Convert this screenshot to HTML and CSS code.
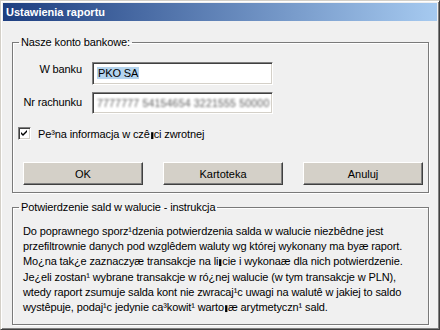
FILE: index.html
```html
<!DOCTYPE html>
<html>
	<head>
		<meta charset="utf-8">
		<title>Ustawienia raportu</title>
		<link rel="stylesheet" href="styles.css">
	</head>
	<body>
		<div class="window">
			<div class="titlebar">Ustawienia raportu</div>
			<div class="content">
				<!-- konto bankowe -->
				<fieldset class="group group-bank">
					<legend>Nasze konto bankowe:</legend>
					<div class="row row-first">
						<label class="lbl">W banku</label>
						<div class="field"><span class="sel">PKO SA</span></div>
					</div>
					<div class="row row-second">
						<label class="lbl">Nr rachunku</label>
						<div class="field field-small"><span class="blur">7777777 54154654 3221555 50000</span></div>
					</div>
					<div class="check-row">
						<span class="checkbox">
							<svg width="7" height="7" viewBox="0 0 7 7"><path d="M0 2 L2 4 L6 0 L6 2 L2 6 L0 4 Z" fill="#000"/></svg>
						</span>
						<span class="check-label">Pe³na informacja w czê<span class="bad">▮</span>ci zwrotnej</span>
					</div>
					<div class="buttons">
						<button class="btn">OK</button>
						<button class="btn">Kartoteka</button>
						<button class="btn">Anuluj</button>
					</div>
				</fieldset>
				<!-- instrukcja -->
				<fieldset class="group group-info">
					<legend>Potwierdzenie sald w walucie - instrukcja</legend>
					<p class="info">
						Do poprawnego sporz¹dzenia potwierdzenia salda w walucie niezbêdne jest<br>
						przefiltrownie danych pod wzglêdem waluty wg której wykonany ma byæ raport.<br>
						Mo¿na tak¿e zaznaczyæ transakcje na li<span class="bad">▮</span>cie i wykonaæ dla nich potwierdzenie.<br>
						Je¿eli zostan¹ wybrane transakcje w ró¿nej walucie (w tym transakcje w PLN),<br>
						wtedy raport zsumuje salda kont nie zwracaj¹c uwagi na walutê w jakiej to saldo<br>
						wystêpuje, podaj¹c jedynie ca³kowit¹ warto<span class="bad">▮</span>æ arytmetyczn¹ sald.
					</p>
				</fieldset>
			</div>
		</div>
	</body>
</html>
```
FILE: styles.css
```css
*{
	margin: 0;
	padding: 0;
}
body{
	font-family: "Liberation Sans", Arial, sans-serif;
	font-size: 11px;
	letter-spacing: -0.12px;
	color: #000;
	background: #f0f0f0;
}
.window{
	width: 440px;
	height: 330px;
	box-sizing: border-box;
	background: #f0f0f0;
	border: 1px solid;
	border-color: #d4d0c8 #404040 #404040 #d4d0c8;
	box-shadow: inset 1px 1px #fff, inset -1px -1px #808080;
	padding: 2px;
}
.titlebar{
	height: 18px;
	line-height: 18px;
	padding-left: 3px;
	color: #fff;
	font-weight: bold;
	letter-spacing: 0;
	background: linear-gradient(to right, #1d3e80, #a6caf0);
}
.content{
	padding: 0 8px 0 9px;
}
.group{
	border: 1px solid #7a7a7a;
	box-shadow: 1px 1px 0 #fff, inset 1px 1px 0 #fff;
	padding: 0;
	margin: 0;
	min-inline-size: 0;
}
.group legend{
	margin-left: 6px;
	padding: 0 2px;
	line-height: 14px;
}
.group-bank{
	margin-top: 14px;
	padding-bottom: 7px;
}
.group-info{
	margin-top: 7px;
	padding-bottom: 8px;
}
.row{
	display: flex;
	align-items: flex-start;
}
.row-first{
	margin-top: 13px;
}
.row-second{
	margin-top: 7px;
}
.lbl{
	width: 69px;
	text-align: right;
	margin-right: 10px;
	line-height: 13px;
	padding-top: 1px;
}
.row-second .lbl{
	padding-top: 4px;
}
.field{
	width: 181px;
	height: 23px;
	box-sizing: border-box;
	background: #fff;
	border: 1px solid;
	border-color: #808080 #fff #fff #808080;
	box-shadow: inset 1px 1px #404040, inset -1px -1px #d4d0c8;
	padding: 3px 0 0 4px;
	line-height: 14px;
	white-space: nowrap;
	overflow: hidden;
}
.field-small{
	height: 22px;
	padding-top: 3px;
}
.sel{
	background: #b4d4ee;
	padding: 0 1px;
}
.blur{
	color: #5c5c5c;
	font-size: 10.5px;
	letter-spacing: 0.2px;
	filter: blur(1px);
	display: inline-block;
}
.check-row{
	display: flex;
	align-items: center;
	margin: 13px 0 0 5px;
	height: 13px;
}
.checkbox{
	width: 13px;
	height: 13px;
	box-sizing: border-box;
	background: #fff;
	border: 1px solid;
	border-color: #808080 #fff #fff #808080;
	box-shadow: inset 1px 1px #404040, inset -1px -1px #d4d0c8;
	display: flex;
	align-items: center;
	justify-content: center;
	margin-right: 7px;
}
.bad{
	font-family: "DejaVu Sans", sans-serif;
	font-size: 9px;
	display: inline-block;
	transform: scaleX(0.7);
	width: 4px;
}
.buttons{
	display: flex;
	gap: 20px;
	margin: 22px 0 0 10px;
}
.btn{
	width: 120px;
	height: 23px;
	font-family: "Liberation Sans", Arial, sans-serif;
	font-size: 11px;
	background: #d4d0c8;
	border: 1px solid;
	border-color: #fff #404040 #404040 #fff;
	box-shadow: inset -1px -1px #808080;
	color: #000;
}
.info{
	margin: 10px 0 0 10px;
	line-height: 15px;
	white-space: nowrap;
}
```
